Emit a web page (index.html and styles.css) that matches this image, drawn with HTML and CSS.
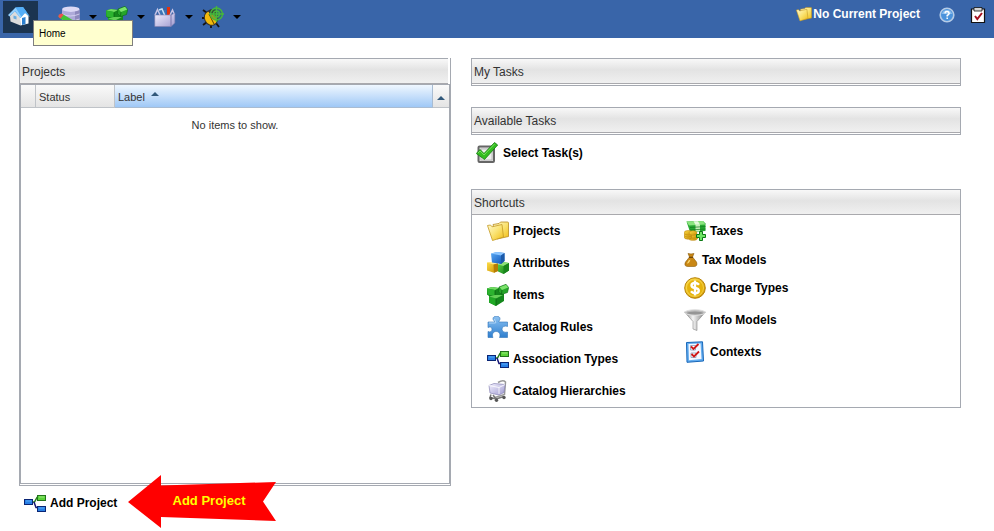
FILE: index.html
```html
<!DOCTYPE html>
<html lang="en">
<head>
<meta charset="utf-8">
<title>Home</title>
<link rel="stylesheet" href="styles.css">
</head>
<body>
<svg class="sprite" aria-hidden="true">
  <defs>
    <linearGradient id="yellow" x1="0" y1="0" x2="1" y2="1"><stop offset="0" stop-color="#fff9cf"/><stop offset=".5" stop-color="#fae373"/><stop offset="1" stop-color="#f0bd14"/></linearGradient>
    <linearGradient id="gold" x1="0" y1="0" x2="1" y2="1"><stop offset="0" stop-color="#ffe04a"/><stop offset="1" stop-color="#c98d00"/></linearGradient>
    <linearGradient id="blue" x1="0" y1="0" x2="1" y2="1"><stop offset="0" stop-color="#5aaaf5"/><stop offset="1" stop-color="#0b52b8"/></linearGradient>
    <linearGradient id="green" x1="0" y1="0" x2="1" y2="1"><stop offset="0" stop-color="#62d24a"/><stop offset="1" stop-color="#0a7d12"/></linearGradient>
    <linearGradient id="sky" x1="0" y1="0" x2="0" y2="1"><stop offset="0" stop-color="#8cc2f2"/><stop offset="1" stop-color="#2f7fcf"/></linearGradient>
    <linearGradient id="steel" x1="0" y1="0" x2="1" y2="0"><stop offset="0" stop-color="#777"/><stop offset=".4" stop-color="#f4f4f4"/><stop offset="1" stop-color="#777"/></linearGradient>
    <linearGradient id="lilac" x1="0" y1="0" x2="1" y2="1"><stop offset="0" stop-color="#f3f1ff"/><stop offset="1" stop-color="#a09bd0"/></linearGradient>
    <symbol id="folder" viewBox="0 0 22 22">
      <path d="M6 4.500 12 3.500 13.500 2H20.500Q21.500 2 21.500 3V16.500L10 19Z" fill="url(#yellow)" stroke="#b98c20" stroke-width=".8"/>
      <path d="M.5 5.500 3.500 5 5 6.800 15 4.500 16.500 17 5.500 20.500Z" fill="url(#yellow)" stroke="#c59a25" stroke-width=".8"/>
    </symbol>
    <symbol id="blocks" viewBox="0 0 22 22">
      <path d="M0 10.500 8 9.500 11 11.500V19L7 20.800 0 18.500Z" fill="url(#gold)"/><path d="M0 10.500 8 9.500 11 11.500 6.500 12.500Z" fill="#ffe98b"/><path d="M6.500 12.500 11 11.500V19L7 20.800Z" fill="#b57c05"/>
      <path d="M11 12.500 16 10 22 11V18.500L16.500 22 11 19.500Z" fill="url(#green)"/><path d="M11 12.500 16 10 22 11 16.500 14Z" fill="#8fe178"/><path d="M16.500 14 22 11V18.500L16.500 22Z" fill="#19851c"/>
      <path d="M4 1.500 10 0 17.500 1V9L14 12 5 10.500Z" fill="url(#blue)"/><path d="M4 1.500 10 0 17.500 1 14 3.500Z" fill="#8bc5ff"/><path d="M14 3.500 17.500 1V9L14 12Z" fill="#1d5aa8"/>
    </symbol>
    <symbol id="cubes" viewBox="0 0 22 22">
      <path d="M0 4.500 5 3 12 4V8L17 10V17L9 22 2 18.500V12L0 10.500Z" fill="#14871c"/>
      <path d="M0 4.500 5 3 12 4 8 6Z" fill="#72dc62"/><path d="M0 4.500 8 6V12L.5 10.500Z" fill="#2cb32f"/>
      <path d="M2 12.500 9 14.500V22L2 18.500Z" fill="#20a825"/><path d="M2 12.500 8 11 16 11 9 14.500Z" fill="#63cf56"/>
      <path d="M12 3 19 .3 21.700 3.500 20.500 8.500 14.500 10.500 11.500 7.500Z" fill="#26a52a" stroke="#0c6913" stroke-width=".6"/><path d="M12.700 3.200 19 .8 21.200 3.500 15 6Z" fill="#7ce36c"/>
      <path d="M15 6 14.500 10M8 6.500V11M9 14.500V21.500" stroke="#075d0d" stroke-width=".7"/>
    </symbol>
    <symbol id="puzzle" viewBox="0 0 22 22">
      <path d="M1 6H7.500C8 5 6 4.500 6 2.800 6 1 7.500 .3 9.500 .3S13 1 13 2.800C13 4.500 11.500 5 12 6H20.500V10.500C18 9.500 15 10.500 15 13.200S18 16.800 20.500 16V21.500H12.500C14 18 12 15.500 9.200 15.500S4.500 18 6 21.500H1V15.500C3 16.500 5 15.500 5 13.200S3 10.500 1 11.500Z" fill="url(#sky)" stroke="#2f73b8" stroke-width=".6"/>
      <path d="M2 7H8.500C9.500 6 7.500 4.500 7.500 3" fill="none" stroke="#c3e0fa" stroke-width=".8"/>
    </symbol>
    <symbol id="nodes" viewBox="0 0 22 22">
      <path d="M9 10H10.500L13 5.500H14" fill="none" stroke="#267b1c" stroke-width="1.500"/><path d="M10 10 12 15.500H14" fill="none" stroke="#171775" stroke-width="1.500"/>
      <rect x=".5" y="7.500" width="8" height="5" fill="#287fe5" stroke="#0a2574"/><path d="M2 9H7.500" stroke="#59a9f5"/>
      <rect x="13.500" y="3.500" width="8" height="5" fill="#5bd33a" stroke="#22731b"/><path d="M15 5H20.500" stroke="#98e87c"/>
      <rect x="13.500" y="14.500" width="8" height="5" fill="#287fe5" stroke="#0a2574"/><path d="M15 16H20.500" stroke="#59a9f5"/>
    </symbol>
    <symbol id="cart" viewBox="0 0 22 22">
      <path d="M11 2.500Q16 -.5 18.500 2L17.500 14.500 8 17.500" fill="none" stroke="#999" stroke-width="1.500"/>
      <path d="M2 5.500 7 3.500 18 4.500 17 12.500 12 15 3 13Z" fill="url(#lilac)" stroke="#8985b4" stroke-width=".7"/>
      <path d="M2 5.500 12 7.500 18 4.500M12 7.500V14" fill="none" stroke="#fff" stroke-width=".8"/>
      <path d="M4 14.500 3 17.500 9 19 17 16.500M6 15 9 19" fill="none" stroke="#777" stroke-width="1.500"/>
      <circle cx="4" cy="18.500" r="1.700" fill="#555"/><circle cx="9.500" cy="20.200" r="1.700" fill="#555"/><circle cx="17" cy="17.500" r="1.700" fill="#555"/>
    </symbol>
    <symbol id="taxes" viewBox="0 0 22 22">
      <path d="M2.500 1.500 19 1 21.500 3.500V11L6 12Z" fill="#27a832"/><path d="M2.500 1.500 19 1 21.500 4.500 5 5.500Z" fill="#8be47f"/><path d="M9.500 1.300H14L16 4.700H11.500Z" fill="#e6f9dd"/><path d="M11.500 5H16V11H11.500Z" fill="#c8efb9"/><path d="M6 7.500 21.500 6.500M6 10 21.500 9" stroke="#11791d" stroke-width=".7"/>
      <g fill="url(#gold)" stroke="#bd8610" stroke-width=".6"><ellipse cx="9" cy="18" rx="4.500" ry="2.300"/><ellipse cx="9" cy="16" rx="4.500" ry="2.300"/><ellipse cx="4" cy="17" rx="3.800" ry="2.200"/><ellipse cx="4" cy="15" rx="3.800" ry="2.200"/><ellipse cx="4.200" cy="12.800" rx="4" ry="2.300"/><ellipse cx="9" cy="13" rx="4" ry="2.300"/></g>
      <path d="M15.500 11.500H18.500V14.500H21.500V17.500H18.500V20.500H15.500V17.500H12.500V14.500H15.500Z" fill="#6ee563" stroke="#0b7814"/>
    </symbol>
    <symbol id="bag" viewBox="0 0 14 14">
      <path d="M4 .5 7 1 10 .5 8.500 4 12.500 9Q14 13.500 10 13.500H4Q-.5 13.500 1.500 9L5.500 4Z" fill="#c98714" stroke="#8a5a0a" stroke-width=".6"/><path d="M5 4.300H9" stroke="#684006" stroke-width="1.200"/><path d="M3.500 9.500Q4.500 7 6.500 6.500 5.500 10 3.500 11Z" fill="#ffe07a"/>
    </symbol>
    <symbol id="coin" viewBox="0 0 22 22">
      <circle cx="11" cy="11" r="10.300" fill="url(#gold)" stroke="#b88408"/><circle cx="11" cy="11" r="8.500" fill="#e5b30d" stroke="#ffdf55" stroke-width=".7"/>
      <path d="M15 7.800Q13.500 6 11 6 7.500 6 7.500 8.500 7.500 10.500 11 11 14.800 11.500 14.800 13.800 14.800 16.200 11 16.200 8.500 16.200 7 14.200M11 3.500V18.500" fill="none" stroke="#fff" stroke-width="2.400"/>
    </symbol>
    <symbol id="funnel" viewBox="0 0 22 22">
      <path d="M.5 3 9 12.500V20L13 21.500V12.500L21.500 3Z" fill="url(#steel)" stroke="#888" stroke-width=".6"/><ellipse cx="11" cy="3.500" rx="10.200" ry="2.800" fill="#bbb" stroke="#e0e0e0"/><ellipse cx="11" cy="4" rx="8" ry="1.500" fill="#959595"/>
    </symbol>
    <symbol id="checklist" viewBox="0 0 22 22">
      <path d="M2.500 1.500 18.500 .8 19.500 20 3 21.300Z" fill="#62adf0" stroke="#1766b8"/><path d="M4.500 3 16.500 2.500 17.500 18 5 19.300Z" fill="#f4f7ff"/>
      <path d="M6.500 4.500H11.500V9H6.500ZM7 12H12V16.500H7Z" fill="#fff" stroke="#8a9bb5" stroke-width=".8"/><path d="M7 5.500 9.500 8 14.500 3M7.500 13 10 15.500 15 10.500" fill="none" stroke="#cf1717" stroke-width="1.800"/>
    </symbol>
    <symbol id="tick" viewBox="0 0 22 22">
      <rect x="2.500" y="4.500" width="15.500" height="15.500" rx="1" fill="#ddd" stroke="#666" stroke-width="2"/><rect x="5" y="7" width="11" height="11" fill="#eee" stroke="#aaa" stroke-width=".7"/>
      <path d="M.3 11.500 4 7.500 8 11.500 18.500 .5 21.700 3 8.500 17.500Z" fill="#34bd21" stroke="#147c10" stroke-width=".8"/><path d="M2 11 4 9 8 13 18.500 2" fill="none" stroke="#85e86b" stroke-width=".8"/>
    </symbol>
    <symbol id="house" viewBox="0 0 22 22">
      <path d="M2 10 7.500 4.500 12.500 11V19.500L2.500 15.500Z" fill="#dcdcdc"/><path d="M12 12 17 6.500 20.500 10V17.500L12.500 19.500Z" fill="#fff"/>
      <path d="M7.500 1.500 15 1 20.500 8.500 22 11 17 7 12.500 12Z" fill="#5cb2f5"/><path d="M7.500 1.500 15 1 19 6.500 15.500 7.500 12 11.500 7 5.500Z" fill="#54aef7"/><path d="M7.500 1.500 0 9 1.500 10.500 7.500 5 12 11.800 13.500 11Z" fill="#92d0ff"/><path d="M14 12 17.500 11V18L14 19Z" fill="#2c80d0"/><path d="M5.500 9.500 8.500 10.500V13.500L5.500 12.500Z" fill="#69acdf"/>
    </symbol>
    <symbol id="database" viewBox="0 0 22 22">
      <path d="M4 3.500V19Q12 23 21.500 19V3.500Z" fill="#aeaad9"/><path d="M17 3V20.500L21.500 19V3.500Z" fill="#8d89bd"/><path d="M4 8Q12 12 21.500 8M4 13Q12 17 21.500 13" stroke="#dcd9f5" stroke-width=".8" fill="none"/><ellipse cx="12.800" cy="3.200" rx="8.700" ry="2.700" fill="#dcd9f5"/>
      <path d="M1 9Q-.5 10.500 1.500 12L14 20 17 15.500 4.500 8Z" fill="#43c238"/><path d="M1 8.500 4 7.500 5.500 9 2.500 12.500Q-.5 11.500 1 8.500" fill="#ed5050"/>
    </symbol>
    <symbol id="toolbox" viewBox="0 0 22 22">
      <path d="M13 1H16V14H13Z" fill="#e2330e"/><path d="M4 3 8 1.500 9.500 4 12 4V13H7Z" fill="#3c75b5"/><path d="M5 4 8 3 11 10" stroke="#c7dff4" fill="none" stroke-width="1.500"/>
      <path d="M1 9 3.500 3.500 6 9M16 9 18.500 4 20.500 9" fill="none" stroke="#c7c4e6" stroke-width="1.500"/><path d="M.8 9H17L20.800 7V17L17 20.500H.8Z" fill="url(#lilac)" stroke="#8582af" stroke-width=".6"/><path d="M17 9V20" stroke="#7a76ac"/>
    </symbol>
    <symbol id="bug" viewBox="0 0 22 22">
      <path d="M5 7 1 4M4 12H0M5 16 1 19M9 18V22M14 17 17 21" stroke="#151515" stroke-width="1.800"/><ellipse cx="9" cy="12" rx="6.500" ry="7.500" transform="rotate(-25 9 12)" fill="#f2b90c" stroke="#333"/><path d="M6 5Q9 1.500 14 4L15 10 8 8Z" fill="#333"/><path d="M7 8 12 18" stroke="#5b4300"/>
      <g fill="none" stroke="#46b83c" stroke-width="1.300"><circle cx="14.500" cy="8" r="6" fill="#2d7a36" fill-opacity=".45"/><circle cx="14.500" cy="8" r="3"/><path d="M14.500 0V16M7 8H22"/></g>
    </symbol>
    <symbol id="clipboard" viewBox="0 0 16 16">
      <path d="M1.500 2H14.500V15.500H1.500Z" fill="#fff" stroke="#111" stroke-width="1.200"/><path d="M4 .5H12V4H4Z" fill="#d5d5d5" stroke="#111" stroke-width=".8"/><path d="M5 9 7.300 12 12 6" fill="none" stroke="#a51220" stroke-width="2"/>
    </symbol>
    <symbol id="help" viewBox="0 0 16 16">
      <circle cx="8" cy="8" r="6.800" fill="#4b93dc" stroke="#b5cbe6" stroke-width="1.600"/><path d="M3 7Q4 3 8 3T13 7Z" fill="#8fc0ee"/><path d="M5.900 6.300Q6.200 4.500 8 4.500T10.200 6.300Q10.200 7.300 8.200 8.500V9.500M8.200 10.500V12" fill="none" stroke="#fff" stroke-width="1.500"/>
    </symbol>
  </defs>
</svg>

<header class="topbar">
  <nav class="tools" aria-label="Main">
    <div class="home">
      <button class="tool tool-active" aria-label="Home" aria-describedby="home-tip"><svg class="icon"><use href="#house"/></svg></button>
      <div class="tooltip" id="home-tip" role="tooltip">Home</div>
    </div>
    <button class="tool" aria-label="Data"><svg class="icon"><use href="#database"/></svg><span class="caret"></span></button>
    <button class="tool" aria-label="Items"><svg class="icon"><use href="#cubes"/></svg><span class="caret"></span></button>
    <button class="tool" aria-label="Tools"><svg class="icon"><use href="#toolbox"/></svg><span class="caret"></span></button>
    <button class="tool" aria-label="Debug"><svg class="icon"><use href="#bug"/></svg><span class="caret"></span></button>
  </nav>
  <div class="session">
    <a class="current" href="#"><svg class="icon-small"><use href="#folder"/></svg>No Current Project</a>
    <button class="mini" aria-label="Help"><svg class="icon-small"><use href="#help"/></svg></button>
    <button class="mini" aria-label="Tasks"><svg class="icon-small"><use href="#clipboard"/></svg></button>
  </div>
</header>

<main class="page">
  <section class="left">
    <div class="panel projects">
      <h2 class="title">Projects</h2>
      <div class="list">
        <table class="records">
          <thead>
            <tr><th class="col-mark"></th><th class="col-status">Status</th><th class="sorted">Label<span class="sort"></span></th><th class="col-menu"><button class="menu" aria-label="Sort"><span class="sort"></span></button></th></tr>
          </thead>
          <tbody><tr><td colspan="4">No items to show.</td></tr></tbody>
        </table>
      </div>
    </div>
    <div class="actions">
      <a class="shortcut" href="#"><svg class="icon"><use href="#nodes"/></svg>Add Project</a>
      <div class="callout">
        <svg class="callout-shape" viewBox="0 0 148 53" aria-hidden="true"><path d="M0 27 33 0V10.500L148 7 135 26.500 148 46 33 42V53Z" fill="#f00"/></svg>
        <span class="callout-text">Add Project</span>
      </div>
    </div>
  </section>

  <section class="right">
    <div class="panel tasks"><h2 class="title">My Tasks</h2></div>
    <div class="available">
      <div class="panel tasks"><h2 class="title">Available Tasks</h2></div>
      <a class="shortcut select-task" href="#"><svg class="icon"><use href="#tick"/></svg>Select Task(s)</a>
    </div>
    <div class="panel">
      <h2 class="title">Shortcuts</h2>
      <div class="shortcuts">
        <div>
          <a class="shortcut" href="#"><svg class="icon"><use href="#folder"/></svg>Projects</a>
          <a class="shortcut" href="#"><svg class="icon"><use href="#blocks"/></svg>Attributes</a>
          <a class="shortcut" href="#"><svg class="icon"><use href="#cubes"/></svg>Items</a>
          <a class="shortcut" href="#"><svg class="icon"><use href="#puzzle"/></svg>Catalog Rules</a>
          <a class="shortcut" href="#"><svg class="icon"><use href="#nodes"/></svg>Association Types</a>
          <a class="shortcut" href="#"><svg class="icon"><use href="#cart"/></svg>Catalog Hierarchies</a>
        </div>
        <div>
          <a class="shortcut" href="#"><svg class="icon"><use href="#taxes"/></svg>Taxes</a>
          <a class="shortcut compact" href="#"><svg class="icon-tiny"><use href="#bag"/></svg>Tax Models</a>
          <a class="shortcut" href="#"><svg class="icon"><use href="#coin"/></svg>Charge Types</a>
          <a class="shortcut" href="#"><svg class="icon"><use href="#funnel"/></svg>Info Models</a>
          <a class="shortcut" href="#"><svg class="icon"><use href="#checklist"/></svg>Contexts</a>
        </div>
      </div>
    </div>
  </section>
</main>
</body>
</html>
```

FILE: styles.css
```css
* { box-sizing: border-box; }
body { margin: 0; background: #fff; color: #000; font: 12px/16px "Liberation Sans", Arial, sans-serif; }
button { border: 0; padding: 0; background: none; font: inherit; }
a { color: inherit; text-decoration: none; }
.sprite { position: absolute; width: 0; height: 0; }
.icon { width: 22px; height: 22px; flex: none; }
.icon-small { width: 16px; height: 16px; flex: none; }
.icon-tiny { width: 14px; height: 14px; flex: none; }

.topbar { display: flex; justify-content: space-between; height: 38px; background: #3965a9; }
.tools { display: flex; align-items: flex-start; padding: 1px 0 0 3px; }
.home { position: relative; margin-right: 20px; }
.tool { display: flex; align-items: center; width: 48px; height: 32px; }
.tool-active { justify-content: center; width: 35px; padding-right: 3px; background: #1b3450; }
.caret { margin-left: 9px; border: 4px solid transparent; border-top-color: #000; border-bottom: 0; }
.tooltip { position: absolute; z-index: 2; top: 19px; left: 30px; width: 100px; height: 26px; padding: 5px; border: 1px solid #7f7f7f; background: #ffffcf; font-size: 10px; }
.session { display: flex; align-items: flex-start; gap: 11px; padding: 6px 8px 0 0; color: #fff; font-weight: bold; }
.current { display: flex; gap: 1px; margin-right: 8px; }
.mini { display: flex; width: 16px; height: 16px; margin-top: 1px; }
.mini + .mini { margin-left: 4px; }

.page { display: grid; grid-template-columns: 432fr 490fr; gap: 20px; padding: 20px 33px 10px 19px; }
.panel { border: 1px solid #a5a9b1; }
.title { height: 25px; margin: 0; padding: 5px 2px; border-bottom: 1px solid #a9a9ad; background: linear-gradient(#f8f8f8, #e3e3e3 45%, #f0f0f0); color: #333; font-size: 12px; font-weight: normal; line-height: 16px; }
.tasks { padding-bottom: 1px; }
.projects { border-top: 0; padding-bottom: 1px; }
.projects .title { height: 26px; margin-right: 2px; border-top: 1px solid #a5a9b1; }
.list { min-height: 400px; border: 1px solid #a5a9b1; }
.records { width: 100%; border-spacing: 0; table-layout: fixed; color: #333; font-size: 11px; }
.records th { height: 23px; padding: 1px 3px 0; border: solid #bfc3c8; border-width: 0 1px 1px 0; background: linear-gradient(#fafafa, #e4e4e4); text-align: left; font-weight: normal; }
.records th:last-child { border-right: 0; }
.records .sorted { border-color: #a9bcd2; background: linear-gradient(#eff7ff, #9fc8f6); }
.records td { padding: 9px 0; text-align: center; }
.col-mark { width: 15px; }
.col-status { width: 79px; }
.col-menu { width: 16px; }
.menu { display: block; margin: auto; }
.sort { display: inline-block; border: 4px solid transparent; border-bottom-color: #31587a; border-top: 0; vertical-align: middle; }
.sorted .sort { margin: 0 0 8px 6px; }

.shortcut { display: flex; align-items: center; gap: 4px; height: 32px; font-weight: bold; }
.compact { height: 25px; }
.actions { position: relative; padding: 1px 0 0 5px; }
.callout { position: absolute; top: -11px; left: 109px; display: grid; place-items: center; width: 148px; height: 53px; }
.callout-shape { width: 148px; height: 53px; grid-area: 1 / 1; }
.callout-text { grid-area: 1 / 1; margin: 0 0 2px 14px; color: #ff0; font-size: 13px; font-weight: bold; }
.right { display: grid; gap: 21px; align-content: start; }
.available { min-height: 61px; }
.select-task { height: 33px; padding: 2px 0 0 5px; gap: 5px; }
.shortcuts { display: grid; grid-template-columns: 197fr 276fr; padding: 0 0 0 15px; }
```
